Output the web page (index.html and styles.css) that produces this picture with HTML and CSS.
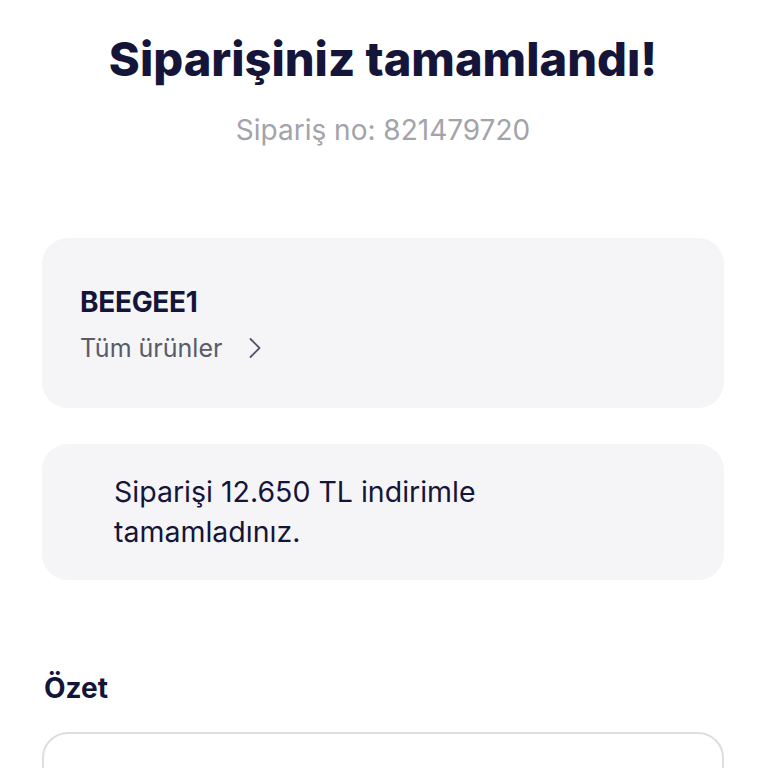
FILE: index.html
```html
<!DOCTYPE html>
<html lang="tr">
<head>
<meta charset="utf-8">
<title>Siparişiniz tamamlandı</title>
<link rel="stylesheet" href="styles.css">
</head>
<body>
<main class="page">
  <header class="hero">
    <h1 class="title">Siparişiniz tamamlandı!</h1>
    <p class="order-no">Sipariş no: 821479720</p>
  </header>

  <section class="card coupon">
    <div class="coupon-code">BEEGEE1</div>
    <a class="coupon-link" href="#">
      <span>Tüm ürünler</span>
      <svg class="chev" width="14" height="22" viewBox="0 0 14 22" aria-hidden="true">
        <path d="M2.5 2 L11.5 11 L2.5 20" fill="none" stroke="#55556a" stroke-width="1.8" stroke-linecap="round" stroke-linejoin="round"/>
      </svg>
    </a>
  </section>

  <section class="card saving">
    <p class="saving-text">Siparişi 12.650 TL indirimle tamamladınız.</p>
  </section>

  <h2 class="section-title">Özet</h2>
  <section class="summary"></section>
</main>
</body>
</html>
```

FILE: styles.css
```css
* { box-sizing: border-box; }
html, body { margin: 0; padding: 0; background: #ffffff; }
body {
  font-family: Inter, "Noto Sans", "Liberation Sans", sans-serif;
  color: #15153a;
}
.page {
  padding: 0 44px 0 42px;
}
.hero {
  text-align: center;
  padding-top: 30px;
}
.title {
  margin: 0;
  font-size: 47px;
  font-weight: 800;
  line-height: 58px;
  letter-spacing: 0;
  color: #15153a;
}
.order-no {
  margin: 26px 0 0;
  font-size: 28px;
  line-height: 32px;
  color: #a3a3aa;
  font-weight: 400;
}
.card {
  background: #f5f5f7;
  border-radius: 26px;
}
.coupon {
  margin-top: 92px;
  height: 170px;
  padding: 48px 38px 0;
}
.coupon-code {
  font-size: 28px;
  font-weight: 700;
  line-height: 32px;
  letter-spacing: -0.3px;
  color: #15153a;
}
.coupon-link {
  margin-top: 14px;
  display: inline-flex;
  align-items: center;
  gap: 26px;
  text-decoration: none;
  color: #5a5a68;
  font-size: 25px;
  line-height: 32px;
}
.chev { display: block; }
.saving {
  margin-top: 36px;
  height: 136px;
  padding: 28px 72px 0;
}
.saving-text {
  margin: 0;
  font-size: 28.5px;
  line-height: 40px;
  color: #15153a;
  max-width: 420px;
}
.section-title {
  margin: 92px 0 0 2px;
  font-size: 28px;
  font-weight: 700;
  line-height: 32px;
  color: #15153a;
}
.summary {
  margin-top: 28px;
  height: 120px;
  border: 2px solid #dedee0;
  border-radius: 26px;
}
```
